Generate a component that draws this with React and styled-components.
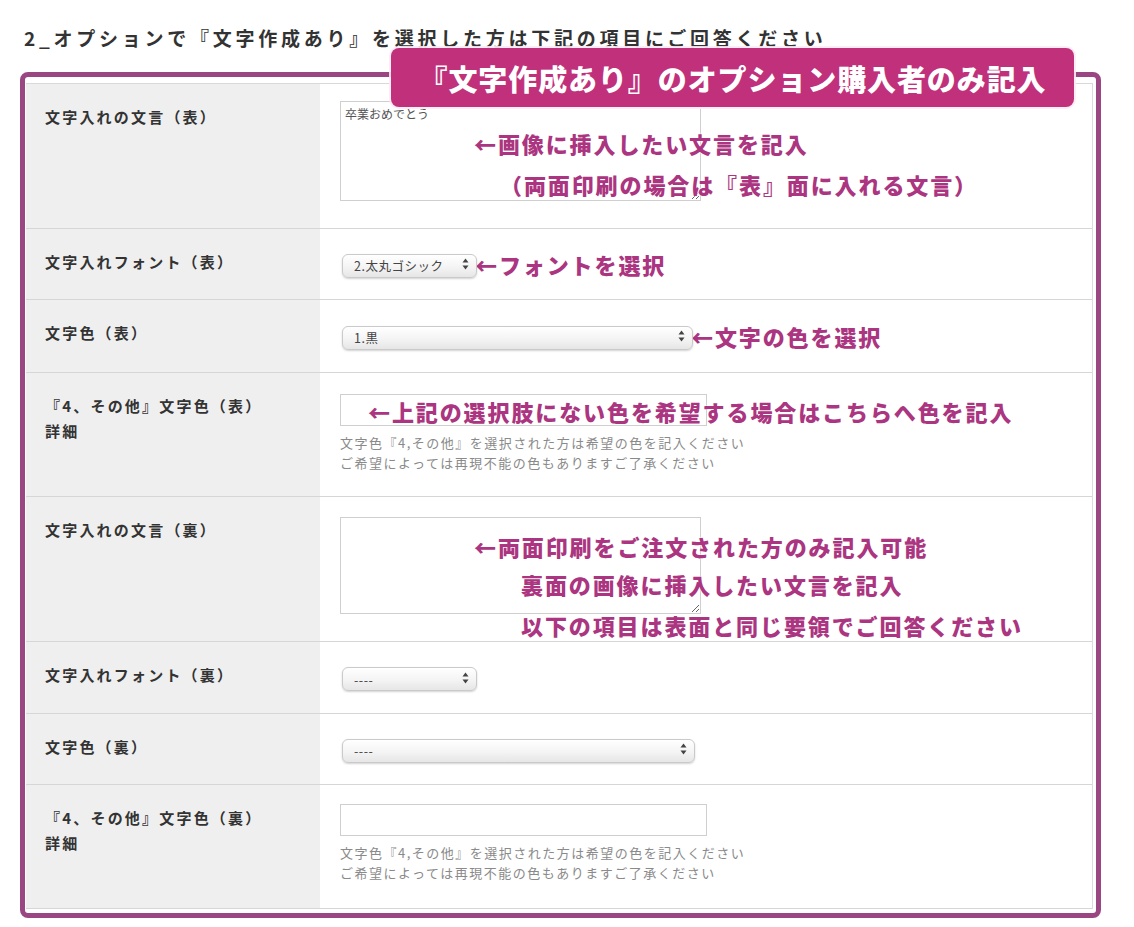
import React from "react";
import styled, { createGlobalStyle } from "styled-components";

const ACCENT = "#ab3580";
const FRAME = "#9a4683";

const GlobalStyle = createGlobalStyle`
  html, body {
    margin: 0;
    padding: 0;
    background: #fff;
  }
  body {
    font-family: "Noto Sans CJK JP", "Noto Sans", sans-serif;
    color: #333;
  }
  * {
    box-sizing: border-box;
  }
`;

const Page = styled.div`
  width: 1134px;
  padding: 26px 0 0 20px;
`;

const Heading = styled.h2`
  margin: 0 0 22px 4px;
  font-size: 19px;
  line-height: 24px;
  font-weight: 700;
  letter-spacing: 3.75px;
  color: #333;
`;

const Frame = styled.div`
  position: relative;
  width: 1081px;
  border: 5px solid ${FRAME};
  border-radius: 8px;
  padding: 6px 3px 4px 1px;
  background: #fff;
`;

const Badge = styled.div`
  position: absolute;
  top: -29px;
  right: 22px;
  width: 683px;
  height: 59px;
  border-radius: 8px;
  background: #c0307b;
  color: #fff;
  font-size: 29px;
  font-weight: 900;
  letter-spacing: 0.9px;
  display: flex;
  align-items: center;
  justify-content: center;
  box-shadow: 0 0 0 2px rgba(255, 235, 245, 0.9);
  z-index: 2;
`;

const Table = styled.div`
  border-top: 1px solid #d9d9d9;
  border-right: 1px solid #dcdcdc;
`;

const Row = styled.div`
  display: grid;
  grid-template-columns: 294px 1fr;
  height: ${(p) => p.$h}px;
  border-bottom: 1px solid #d6d6d6;
`;

const Label = styled.div`
  background: #efefef;
  padding: 20px 0 0 19px;
  font-size: 15px;
  line-height: 25px;
  font-weight: 700;
  letter-spacing: 2.2px;
  color: #333;
`;

const Cell = styled.div`
  position: relative;
  padding: ${(p) => (p.$center ? "0 20px" : `${p.$top || 19}px 20px 0`)};
  display: flex;
  flex-direction: ${(p) => (p.$center ? "row" : "column")};
  align-items: ${(p) => (p.$center ? "center" : "flex-start")};
`;

const TextArea = styled.textarea`
  width: 361px;
  height: ${(p) => p.$h}px;
  border: 1px solid #cfcfcf;
  border-radius: 0;
  padding: 4px 4px;
  font-family: "Noto Sans CJK JP", sans-serif;
  font-size: 12px;
  line-height: 16px;
  color: #555;
  background: #fff;
  outline: none;
`;

const TextInput = styled.input`
  width: 367px;
  height: 32px;
  border: 1px solid #cfcfcf;
  padding: 0 6px;
  font-size: 12px;
  background: #fff;
  outline: none;
`;

const SelectWrap = styled.div`
  position: relative;
  margin-left: 2px;
  width: ${(p) => p.$w}px;
  height: 24px;
  flex: none;
`;

const Select = styled.select`
  appearance: none;
  -webkit-appearance: none;
  width: 100%;
  height: 100%;
  border: 1px solid #cacaca;
  border-radius: 6px;
  background: linear-gradient(#ffffff 0%, #f4f4f4 55%, #e6e6e6 100%);
  box-shadow: 0 1px 2px rgba(0, 0, 0, 0.18);
  padding: 0 20px 0 11px;
  font-family: "Noto Sans CJK JP", sans-serif;
  font-size: 12.5px;
  letter-spacing: 0.5px;
  color: #444;
  outline: none;
`;

const Arrows = styled.svg`
  position: absolute;
  right: 8px;
  top: 6px;
  pointer-events: none;
`;

const Help = styled.div`
  margin-top: 7px;
  font-size: 13px;
  line-height: 20px;
  letter-spacing: 1.5px;
  color: #8a8a8a;
`;

const Note = styled.span`
  font-size: 22px;
  line-height: 28px;
  font-weight: 900;
  letter-spacing: 1.9px;
  color: ${ACCENT};
  white-space: nowrap;
  text-shadow: 0 0 2px #fff, 0 0 2px #fff;
`;

const FloatNote = styled(Note)`
  position: absolute;
  left: ${(p) => p.$x}px;
  top: ${(p) => p.$y}px;
  z-index: 1;
`;

const InlineNote = styled(Note)`
  margin-left: -2px;
`;

function Dropdown({ width, value }) {
  return (
    <SelectWrap $w={width}>
      <Select defaultValue={value}>
        <option value={value}>{value}</option>
      </Select>
      <Arrows width="7" height="12" viewBox="0 0 7 12">
        <path d="M3.5 0.5 L6.5 4.5 L0.5 4.5 Z" fill="#444" />
        <path d="M3.5 11.5 L6.5 7.5 L0.5 7.5 Z" fill="#444" />
      </Arrows>
    </SelectWrap>
  );
}

function ColorHelp() {
  return (
    <Help>
      文字色『4,その他』を選択された方は希望の色を記入ください
      <br />
      ご希望によっては再現不能の色もありますご了承ください
    </Help>
  );
}

export default function App() {
  return (
    <Page>
      <GlobalStyle />
      <Heading>2_オプションで『文字作成あり』を選択した方は下記の項目にご回答ください</Heading>
      <Frame>
        <Badge>『文字作成あり』のオプション購入者のみ記入</Badge>
        <Table>
          <Row $h={145}>
            <Label>文字入れの文言（表）</Label>
            <Cell $top={17}>
              <TextArea $h={100} defaultValue="卒業おめでとう" />
              <FloatNote $x={154} $y={45}>←画像に挿入したい文言を記入</FloatNote>
              <FloatNote $x={180} $y={86}>（両面印刷の場合は『表』面に入れる文言）</FloatNote>
            </Cell>
          </Row>
          <Row $h={71}>
            <Label>文字入れフォント（表）</Label>
            <Cell $center>
              <Dropdown width={135} value="2.太丸ゴシック" />
              <InlineNote>←フォントを選択</InlineNote>
            </Cell>
          </Row>
          <Row $h={73}>
            <Label>文字色（表）</Label>
            <Cell $center>
              <Dropdown width={351} value="1.黒" />
              <InlineNote>←文字の色を選択</InlineNote>
            </Cell>
          </Row>
          <Row $h={124}>
            <Label>
              『4、その他』文字色（表）
              <br />
              詳細
            </Label>
            <Cell $top={21}>
              <TextInput />
              <ColorHelp />
              <FloatNote $x={48} $y={24}>←上記の選択肢にない色を希望する場合はこちらへ色を記入</FloatNote>
            </Cell>
          </Row>
          <Row $h={145}>
            <Label>文字入れの文言（裏）</Label>
            <Cell $top={20}>
              <TextArea $h={97} />
              <FloatNote $x={154} $y={35}>←両面印刷をご注文された方のみ記入可能</FloatNote>
              <FloatNote $x={201} $y={73}>裏面の画像に挿入したい文言を記入</FloatNote>
              <FloatNote $x={201} $y={114}>以下の項目は表面と同じ要領でご回答ください</FloatNote>
            </Cell>
          </Row>
          <Row $h={72}>
            <Label>文字入れフォント（裏）</Label>
            <Cell $center>
              <Dropdown width={135} value="----" />
            </Cell>
          </Row>
          <Row $h={71}>
            <Label>文字色（裏）</Label>
            <Cell $center>
              <Dropdown width={353} value="----" />
            </Cell>
          </Row>
          <Row $h={124}>
            <Label>
              『4、その他』文字色（裏）
              <br />
              詳細
            </Label>
            <Cell $top={19}>
              <TextInput />
              <ColorHelp />
            </Cell>
          </Row>
        </Table>
      </Frame>
    </Page>
  );
}
